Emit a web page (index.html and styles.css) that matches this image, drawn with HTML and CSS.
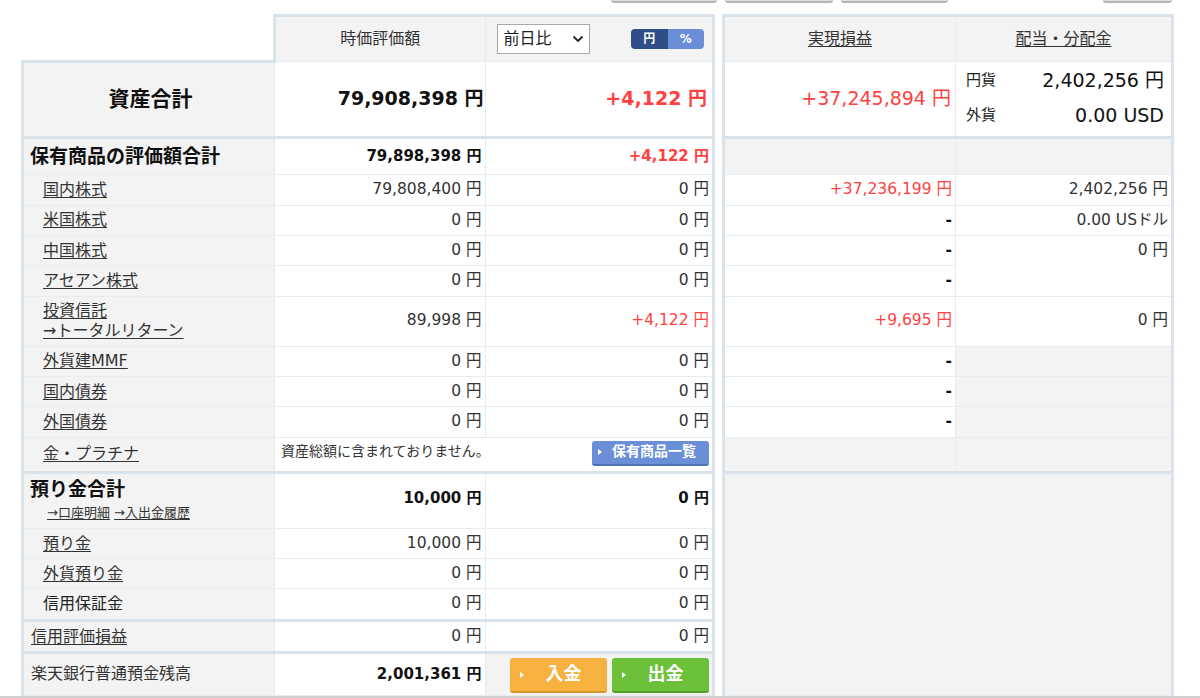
FILE: index.html
```html
<!DOCTYPE html>
<html lang="ja">
<head>
<meta charset="utf-8">
<title>資産残高・合計</title>
<link rel="stylesheet" href="styles.css">
</head>
<body>
<div class="topbar">
  <span class="topbtn tb1"></span><span class="topbtn tb2"></span><span class="topbtn tb3"></span><span class="topbtn tb4"></span>
</div>
<table class="sheet">
  <colgroup>
    <col class="c-lab"><col class="c-val"><col class="c-diff"><col class="c-gap"><col class="c-real"><col class="c-div">
  </colgroup>
  <tr class="r-head">
    <td class="corner"></td>
    <td class="hd hv">時価評価額</td>
    <td class="hd diff hdiff">
      <div class="diffbar">
        <div class="select">前日比<svg class="chev" width="12" height="8" viewBox="0 0 12 8"><path d="M1.5 1.5 L6 6 L10.5 1.5" fill="none" stroke="#222" stroke-width="1.8"/></svg></div>
        <div class="toggle"><span class="t-on">円</span><span class="t-off">%</span></div>
      </div>
    </td>
    <td class="gap"></td>
    <td class="hd real"><span class="lnk">実現損益</span></td>
    <td class="hd dv"><span class="lnk">配当・分配金</span></td>
  </tr>
  <tr class="r-asset thickb">
    <td class="lab lab-asset">資産合計</td>
    <td class="num big bold pr2">79,908,398 円</td>
    <td class="num big bold red diff pr5">+4,122 円</td>
    <td class="gap"></td>
    <td class="num big red real">+37,245,894 円</td>
    <td class="dv dv-asset">
      <div class="cur">
        <span class="cl">円貨</span><span class="cv">2,402,256 円</span>
        <span class="cl">外貨</span><span class="cv">0.00 USD</span>
      </div>
    </td>
  </tr>
  <tr class="r-hold">
    <td class="lab lab-b">保有商品の評価額合計</td>
    <td class="num b15">79,898,398 円</td>
    <td class="num b15 red diff">+4,122 円</td>
    <td class="gap"></td>
    <td class="real g"></td>
    <td class="dv g"></td>
  </tr>
  <tr class="r30a">
    <td class="lab sub"><span class="lnk">国内株式</span></td>
    <td class="num">79,808,400 円</td>
    <td class="num diff">0 円</td>
    <td class="gap"></td>
    <td class="num red real">+37,236,199 円</td>
    <td class="num dv">2,402,256 円</td>
  </tr>
  <tr class="r30a">
    <td class="lab sub"><span class="lnk">米国株式</span></td>
    <td class="num">0 円</td>
    <td class="num diff">0 円</td>
    <td class="gap"></td>
    <td class="num real dash">-</td>
    <td class="num dv">0.00 USドル</td>
  </tr>
  <tr class="r30">
    <td class="lab sub"><span class="lnk">中国株式</span></td>
    <td class="num">0 円</td>
    <td class="num diff">0 円</td>
    <td class="gap"></td>
    <td class="num real dash">-</td>
    <td class="num dv nob">0 円</td>
  </tr>
  <tr class="r30a">
    <td class="lab sub"><span class="lnk">アセアン株式</span></td>
    <td class="num">0 円</td>
    <td class="num diff">0 円</td>
    <td class="gap"></td>
    <td class="num real dash">-</td>
    <td class="num dv not"></td>
  </tr>
  <tr class="r-fund">
    <td class="lab sub"><span class="lnk">投資信託</span><br><span class="lnk">→トータルリターン</span></td>
    <td class="num">89,998 円</td>
    <td class="num red diff">+4,122 円</td>
    <td class="gap"></td>
    <td class="num red real">+9,695 円</td>
    <td class="num dv">0 円</td>
  </tr>
  <tr class="r30a">
    <td class="lab sub"><span class="lnk">外貨建MMF</span></td>
    <td class="num">0 円</td>
    <td class="num diff">0 円</td>
    <td class="gap"></td>
    <td class="num real dash">-</td>
    <td class="dv g"></td>
  </tr>
  <tr class="r30">
    <td class="lab sub"><span class="lnk">国内債券</span></td>
    <td class="num">0 円</td>
    <td class="num diff">0 円</td>
    <td class="gap"></td>
    <td class="num real dash">-</td>
    <td class="dv g"></td>
  </tr>
  <tr class="r30a">
    <td class="lab sub"><span class="lnk">外国債券</span></td>
    <td class="num">0 円</td>
    <td class="num diff">0 円</td>
    <td class="gap"></td>
    <td class="num real dash">-</td>
    <td class="dv g"></td>
  </tr>
  <tr class="r-gold thickb">
    <td class="lab sub"><span class="lnk">金・プラチナ</span></td>
    <td class="note diff" colspan="2">
      <div class="notebar">
        <span class="notetxt">資産総額に含まれておりません。</span>
        <span class="btn-blue"><i class="tri"></i>保有商品一覧</span>
      </div>
    </td>
    <td class="gap"></td>
    <td class="real g"></td>
    <td class="dv g"></td>
  </tr>
  <tr class="r-dep">
    <td class="lab lab-dep">
      <div class="dep-title">預り金合計</div>
      <div class="sublinks"><span class="lnk">→口座明細</span> <span class="lnk">→入出金履歴</span></div>
    </td>
    <td class="num b15 lift">10,000 円</td>
    <td class="num b15 diff lift">0 円</td>
    <td class="gap" rowspan="6"></td>
    <td class="bigempty" colspan="2" rowspan="6"></td>
  </tr>
  <tr class="r30">
    <td class="lab sub"><span class="lnk">預り金</span></td>
    <td class="num">10,000 円</td>
    <td class="num diff">0 円</td>
  </tr>
  <tr class="r30">
    <td class="lab sub"><span class="lnk">外貨預り金</span></td>
    <td class="num">0 円</td>
    <td class="num diff">0 円</td>
  </tr>
  <tr class="r32 thickb">
    <td class="lab sub plain">信用保証金</td>
    <td class="num">0 円</td>
    <td class="num diff">0 円</td>
  </tr>
  <tr class="r32 thickb">
    <td class="lab lab-7"><span class="lnk">信用評価損益</span></td>
    <td class="num">0 円</td>
    <td class="num diff">0 円</td>
  </tr>
  <tr class="r-bank">
    <td class="lab lab-7">楽天銀行普通預金残高</td>
    <td class="num b15">2,001,361 円</td>
    <td class="diff g cashcell">
      <div class="cashbtns">
        <span class="btn-cash in"><i class="tri"></i><span class="ct">入金</span><span></span></span>
        <span class="btn-cash out"><i class="tri"></i><span class="ct">出金</span><span></span></span>
      </div>
    </td>
  </tr>
</table>
<div class="bottomline"></div>
</body>
</html>
```

FILE: styles.css
```css
:root {
  --thin: #e6ecf0;
  --thick: #dae3ea;
  --gray: #f3f3f3;
  --red: #ff4141;
}

* { box-sizing: border-box; }

html, body {
  margin: 0;
  padding: 0;
  background: #fff;
}

body {
  width: 1200px;
  height: 698px;
  overflow: hidden;
  font-family: "DejaVu Sans", "Noto Sans CJK JP", sans-serif;
  color: #333;
}

/* cut-off buttons at the very top */
.topbar {
  display: flex;
  height: 3px;
  padding-left: 611px;
  gap: 8px;
}
.topbtn {
  display: block;
  height: 3px;
  background: #dedede;
  border-bottom: 2px solid #b5b5b5;
  border-radius: 0 0 3px 3px;
}
.tb1 { width: 106px; }
.tb2 { width: 108px; }
.tb3 { width: 107px; }
.tb4 { width: 69px; margin-left: auto; margin-right: 28px; }

/* main table */
.sheet {
  border-collapse: collapse;
  table-layout: fixed;
  width: 1153px;
  margin: 11px 0 0 21px;
}
.c-lab { width: 252px; }
.c-val { width: 210.5px; }
.c-diff { width: 228.5px; }
.c-gap { width: 10px; }
.c-real { width: 232px; }
.c-div { width: 217px; }

.sheet td {
  border: 1px solid var(--thin);
  padding: 0 3px;
  vertical-align: middle;
  font-size: 15.5px;
  line-height: 1.25;
  background: #fff;
  white-space: nowrap;
}
.sheet td.gap,
.sheet td.corner {
  border: none;
  background: #fff;
}

.lab {
  border-left: 3px solid var(--thick) !important;
  background: var(--gray) !important;
  font-size: 16px !important;
  padding-left: 6px !important;
}
.diff { border-right: 3px solid var(--thick) !important; }
.real { border-left: 3px solid var(--thick) !important; }
.dv { border-right: 3px solid var(--thick) !important; }

tr.thickb > td:not(.gap) { border-bottom: 3px solid var(--thick); }

/* rows */
.r-head { height: 46px; }
.r-asset { height: 76px; }
.r-hold { height: 37px; }
.r30 { height: 30px; }
.r30a { height: 30.5px; }
.r-fund { height: 50px; }
.r-gold { height: 35.5px; }
.r-dep { height: 56px; }
.r32 { height: 32px; }
.r-bank { height: 42.5px; }

/* header */
.sheet td.hd {
  border-top: 3px solid var(--thick);
  background: var(--gray);
  text-align: center;
  font-size: 16px;
}
.sheet td.hv { border-left: 3px solid var(--thick); }
.sheet td.hdiff { padding: 0 8px 0 11px; }
.diffbar {
  display: flex;
  align-items: center;
  justify-content: space-between;
}
.select {
  width: 93px;
  height: 30px;
  border: 1px solid #a9a9a9;
  background: #fff;
  display: flex;
  align-items: center;
  justify-content: space-between;
  padding: 0 5px 0 6px;
  font-size: 16px;
  color: #222;
}
.chev { display: block; }
.toggle {
  display: flex;
  width: 73px;
  height: 20px;
  border-radius: 4px;
  overflow: hidden;
  font-size: 12px;
  font-weight: bold;
  color: #fff;
}
.toggle span {
  flex: 1;
  display: flex;
  align-items: center;
  justify-content: center;
}
.t-on { background: #2f4e88; }
.t-off { background: #6a8fd8; }

.lnk {
  color: #333;
  text-decoration: underline;
  text-underline-offset: 2px;
}

/* values */
.num { text-align: right; }
.sheet td.bold { font-weight: bold; color: #111; }
.sheet td.big { font-size: 19px; }
.sheet td.pr2 { padding-right: 1px; }
.sheet td.pr5 { padding-right: 5px; }
.sheet td.real.big { padding-right: 4px; }
.sheet td.b15 { font-size: 15px; font-weight: bold; color: #111; }
.sheet td.dash { font-weight: bold; color: #111; }
.sheet td.red { color: var(--red); }
.sheet td.g { background: var(--gray); }
.sheet td.nob { border-bottom: none; }
.sheet td.not { border-top: none; }

.sheet td.lab-asset {
  border-top: 3px solid var(--thick);
  text-align: center;
  font-size: 21px !important;
  font-weight: bold;
  color: #111;
}
.sheet td.lab-b {
  font-size: 19px !important;
  font-weight: bold;
  color: #111;
}
.sheet td.sub { padding-left: 19px !important; }
.sheet td.lab-7 { padding-left: 7px !important; }
.plain { color: #222; }

/* dividend asset cell */
.sheet td.dv-asset { padding: 0 7px 0 10px; }
.cur {
  display: grid;
  grid-template-columns: auto 1fr;
  grid-auto-rows: 35px;
  align-items: center;
  margin-top: -2px;
}
.cl { font-size: 15px; color: #222; }
.cv { text-align: right; font-size: 19px; color: #111; }

/* gold row */
.sheet td.note {
  vertical-align: top;
  padding: 3px 3px 0 6px;
}
.notebar {
  display: flex;
  justify-content: space-between;
  align-items: flex-start;
}
.notetxt {
  font-size: 14px;
  line-height: 20px;
  color: #333;
}
.btn-blue {
  display: flex;
  align-items: center;
  gap: 10px;
  width: 117px;
  height: 25px;
  padding-left: 6px;
  background: #6b8fd7;
  border-bottom: 2px solid #4d70b6;
  border-radius: 3px;
  color: #fff;
  font-size: 14px;
  font-weight: bold;
}
.tri {
  display: block;
  width: 0;
  height: 0;
  border-left: 4px solid #fff;
  border-top: 3px solid transparent;
  border-bottom: 3px solid transparent;
}

/* deposit total */
.sheet td.lab-dep {
  vertical-align: top;
  padding-top: 4px;
}
.dep-title {
  font-size: 19px;
  font-weight: bold;
  line-height: 22px;
  color: #111;
}
.sublinks {
  font-size: 13px;
  line-height: 18px;
  margin-top: 4px;
  padding-left: 17px;
}
.sheet td.lift { padding-bottom: 6px; }

.sheet td.bigempty {
  background: var(--gray);
  border-top: 3px solid var(--thick);
  border-left: 3px solid var(--thick);
  border-right: 3px solid var(--thick);
}

/* bank row */
.sheet td.cashcell {
  vertical-align: top;
  padding: 4px 3px 0 0;
}
.cashbtns {
  display: flex;
  justify-content: flex-end;
  gap: 5px;
}
.btn-cash {
  display: grid;
  grid-template-columns: 1fr auto 1fr;
  align-items: center;
  width: 97px;
  height: 35px;
  padding-left: 10px;
  border-radius: 3px;
  color: #fff;
  font-size: 18px;
  font-weight: bold;
}
.btn-cash.in { background: #f6b13f; border-bottom: 2px solid #d8962c; }
.btn-cash.out { background: #6dc13a; border-bottom: 2px solid #51a12a; }
.ct { text-align: center; }

.bottomline {
  height: 3px;
  background: #cfcfcf;
}
```
